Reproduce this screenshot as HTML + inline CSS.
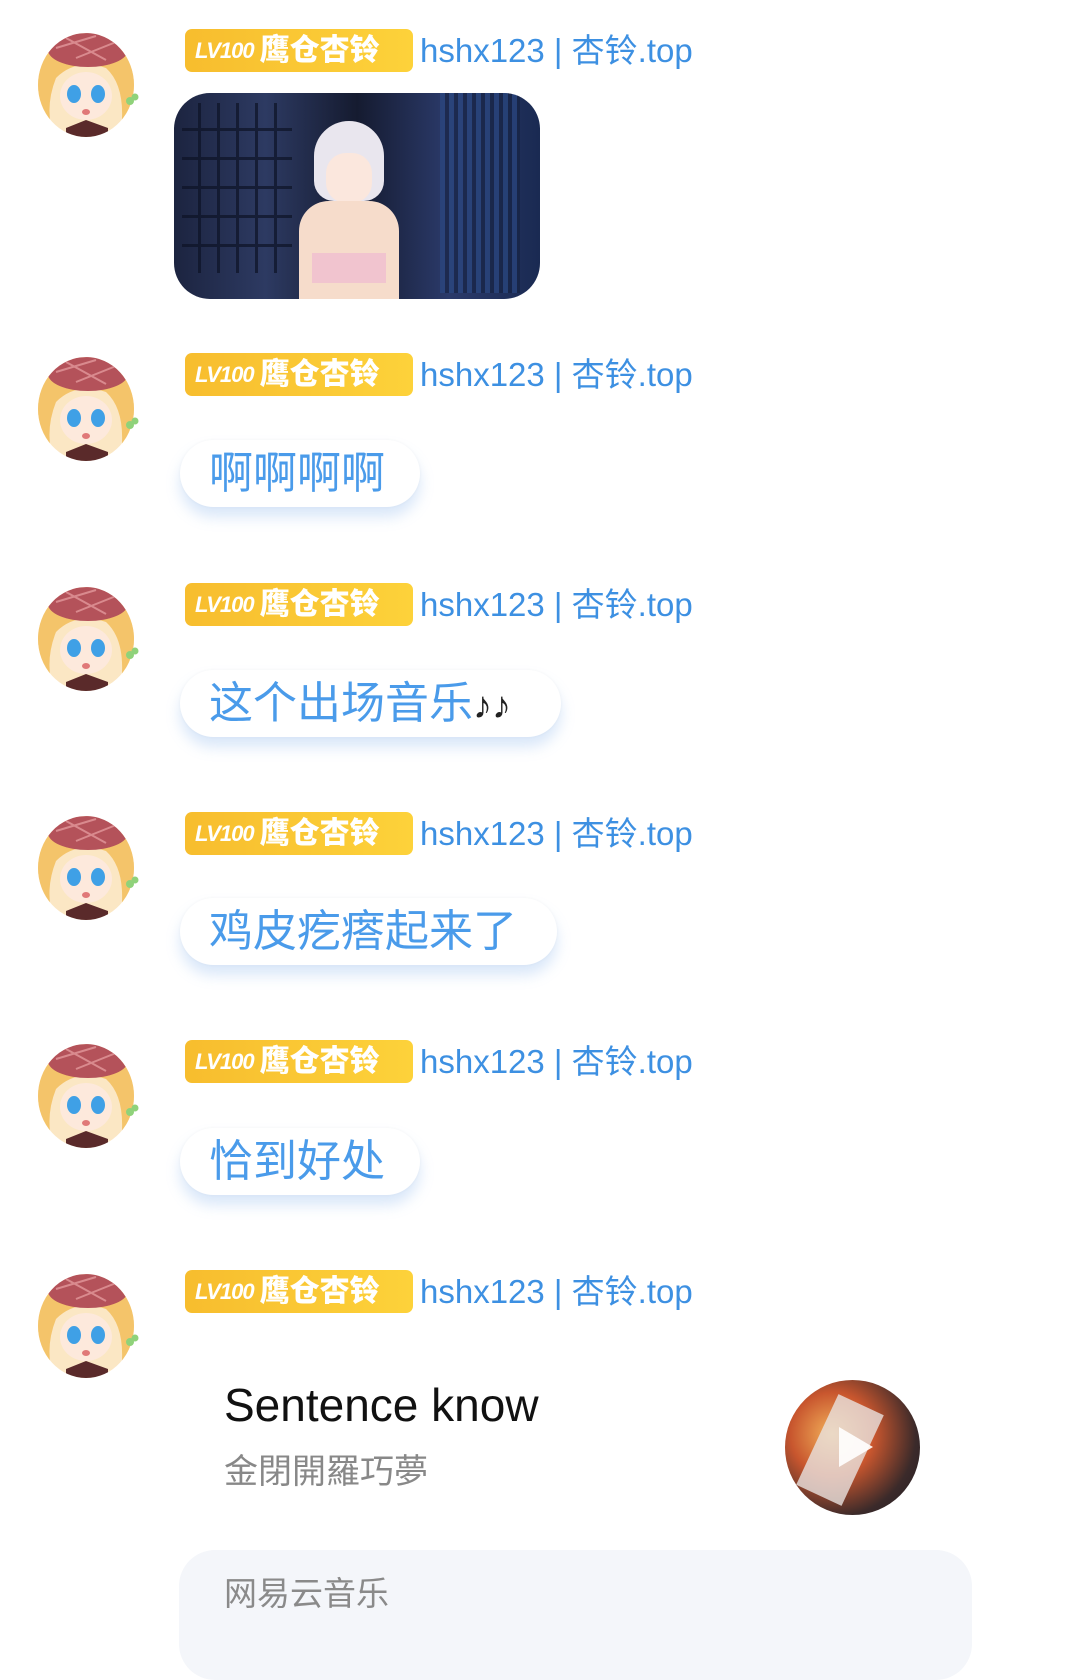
<!DOCTYPE html>
<html><head><meta charset="utf-8"><style>
body{margin:0;width:1080px;height:1637px;background:#fff;position:relative;overflow:hidden;font-family:"Liberation Sans","Noto Sans CJK SC",sans-serif}
.av{position:absolute;left:36px;width:108px;height:110px}
.hd{position:absolute;left:185px;height:43px;white-space:nowrap}
.badge{position:absolute;left:0;top:0;width:228px;height:43px;border-radius:7px;background:linear-gradient(90deg,#f7bd2e,#fdd23a);color:#fff;font-size:30px;line-height:43px;font-weight:bold}
.badge i{font-weight:bold;font-size:22px;margin-left:10px;letter-spacing:-1px;vertical-align:2px}
.badge b{margin-left:6px}
.nm{position:absolute;left:235px;top:0;line-height:43px;font-size:33px;color:#3d90e2}
.bub{position:absolute;left:180px;height:67px;border-radius:34px;background:#fff;box-shadow:0 10px 14px rgba(120,170,235,.28),0 0 3px rgba(0,0,0,.04);color:#4a9bea;font-size:44px;line-height:67px;padding:0 16px 0 29px;box-sizing:border-box;white-space:nowrap}
</style></head><body>
<svg width="0" height="0" style="position:absolute"><defs>
<symbol id="a" viewBox="0 0 108 110">
<clipPath id="c"><ellipse cx="50" cy="57" rx="48" ry="52"/></clipPath>
<g clip-path="url(#c)">
<rect width="108" height="110" fill="#fbe7c4"/>
<path d="M0 30 Q50 -5 100 30 L100 110 L84 110 Q92 60 70 40 Q40 30 20 50 Q8 80 18 110 L0 110Z" fill="#f4c46a"/>
<ellipse cx="52" cy="22" rx="40" ry="17" fill="#b4525a"/>
<path d="M20 20 L60 8 M40 30 L80 14 M30 10 L70 32" stroke="#d98a8e" stroke-width="2"/>
<ellipse cx="50" cy="68" rx="26" ry="24" fill="#fde9dc"/>
<ellipse cx="38" cy="66" rx="7" ry="9" fill="#3fa0e6"/>
<ellipse cx="62" cy="66" rx="7" ry="9" fill="#3fa0e6"/>
<ellipse cx="50" cy="84" rx="4" ry="3" fill="#e07878"/>
<path d="M30 100 L50 92 L72 100 L72 110 L30 110Z" fill="#5a2a2a"/>
<path d="M10 90 Q20 100 30 110 L0 110Z" fill="#d8cfe6"/>
</g>
<circle cx="94" cy="73" r="4" fill="#8fd27a"/><circle cx="99" cy="69" r="3.5" fill="#8fd27a"/>
</symbol></defs></svg>

<!-- row 1 -->
<svg class="av" style="top:28px"><use href="#a"/></svg>
<div class="hd" style="top:29px"><div class="badge"><i>LV100</i><b>鹰仓杏铃</b></div><div class="nm">hshx123 | 杏铃.top</div></div>
<div style="position:absolute;left:174px;top:93px;width:366px;height:206px;border-radius:36px;overflow:hidden;background:linear-gradient(90deg,#1c2440 0%,#2d3a62 25%,#151b30 50%,#2b3a6a 75%,#1a2a52 100%)">
<div style="position:absolute;left:8px;top:10px;width:110px;height:170px;background:repeating-linear-gradient(90deg,transparent 0 16px,#0d1326 16px 19px),repeating-linear-gradient(0deg,transparent 0 26px,#0d1326 26px 29px);opacity:.7"></div>
<div style="position:absolute;right:20px;top:0;width:80px;height:200px;background:repeating-linear-gradient(90deg,#2a4a86 0 5px,#14203e 5px 9px);opacity:.6"></div>
<div style="position:absolute;left:140px;top:28px;width:70px;height:80px;border-radius:35px 35px 20px 20px;background:#e9e6ee"></div>
<div style="position:absolute;left:152px;top:60px;width:46px;height:50px;border-radius:20px;background:#fbe7dd"></div>
<div style="position:absolute;left:125px;top:108px;width:100px;height:100px;border-radius:30px 30px 0 0;background:#f6dccb"></div>
<div style="position:absolute;left:138px;top:160px;width:74px;height:30px;background:#f1c4cf"></div>
</div>

<!-- row 2 -->
<svg class="av" style="top:352px"><use href="#a"/></svg>
<div class="hd" style="top:353px"><div class="badge"><i>LV100</i><b>鹰仓杏铃</b></div><div class="nm">hshx123 | 杏铃.top</div></div>
<div class="bub" style="top:440px;width:240px">啊啊啊啊</div>

<!-- row 3 -->
<svg class="av" style="top:582px"><use href="#a"/></svg>
<div class="hd" style="top:583px"><div class="badge"><i>LV100</i><b>鹰仓杏铃</b></div><div class="nm">hshx123 | 杏铃.top</div></div>
<div class="bub" style="top:670px;width:381px">这个出场音乐<span style="color:#222;font-size:38px">♪♪</span></div>

<!-- row 4 -->
<svg class="av" style="top:811px"><use href="#a"/></svg>
<div class="hd" style="top:812px"><div class="badge"><i>LV100</i><b>鹰仓杏铃</b></div><div class="nm">hshx123 | 杏铃.top</div></div>
<div class="bub" style="top:898px;width:377px">鸡皮疙瘩起来了</div>

<!-- row 5 -->
<svg class="av" style="top:1039px"><use href="#a"/></svg>
<div class="hd" style="top:1040px"><div class="badge"><i>LV100</i><b>鹰仓杏铃</b></div><div class="nm">hshx123 | 杏铃.top</div></div>
<div class="bub" style="top:1128px;width:240px">恰到好处</div>

<!-- row 6 -->
<svg class="av" style="top:1269px"><use href="#a"/></svg>
<div class="hd" style="top:1270px"><div class="badge"><i>LV100</i><b>鹰仓杏铃</b></div><div class="nm">hshx123 | 杏铃.top</div></div>
<div style="position:absolute;left:224px;top:1378px;font-size:46px;color:#111">Sentence know</div>
<div style="position:absolute;left:224px;top:1444px;font-size:34px;color:#888">金閉開羅巧夢</div>
<div style="position:absolute;left:785px;top:1380px;width:135px;height:135px;border-radius:50%;background:radial-gradient(circle at 35% 40%,#f3b25a 0%,#c8562e 35%,#3b2a2a 70%,#1d1a22 100%);overflow:hidden">
<div style="position:absolute;left:30px;top:20px;width:50px;height:100px;background:#e8e2e0;transform:rotate(25deg);opacity:.8"></div>
<div style="position:absolute;left:54px;top:47px;width:0;height:0;border-left:34px solid rgba(255,255,255,.9);border-top:20px solid transparent;border-bottom:20px solid transparent"></div>
</div>
<div style="position:absolute;left:179px;top:1550px;width:793px;height:130px;border-radius:36px;background:#f4f6fa"></div>
<div style="position:absolute;left:224px;top:1567px;font-size:33px;color:#8a8a8a">网易云音乐</div>
</body></html>
